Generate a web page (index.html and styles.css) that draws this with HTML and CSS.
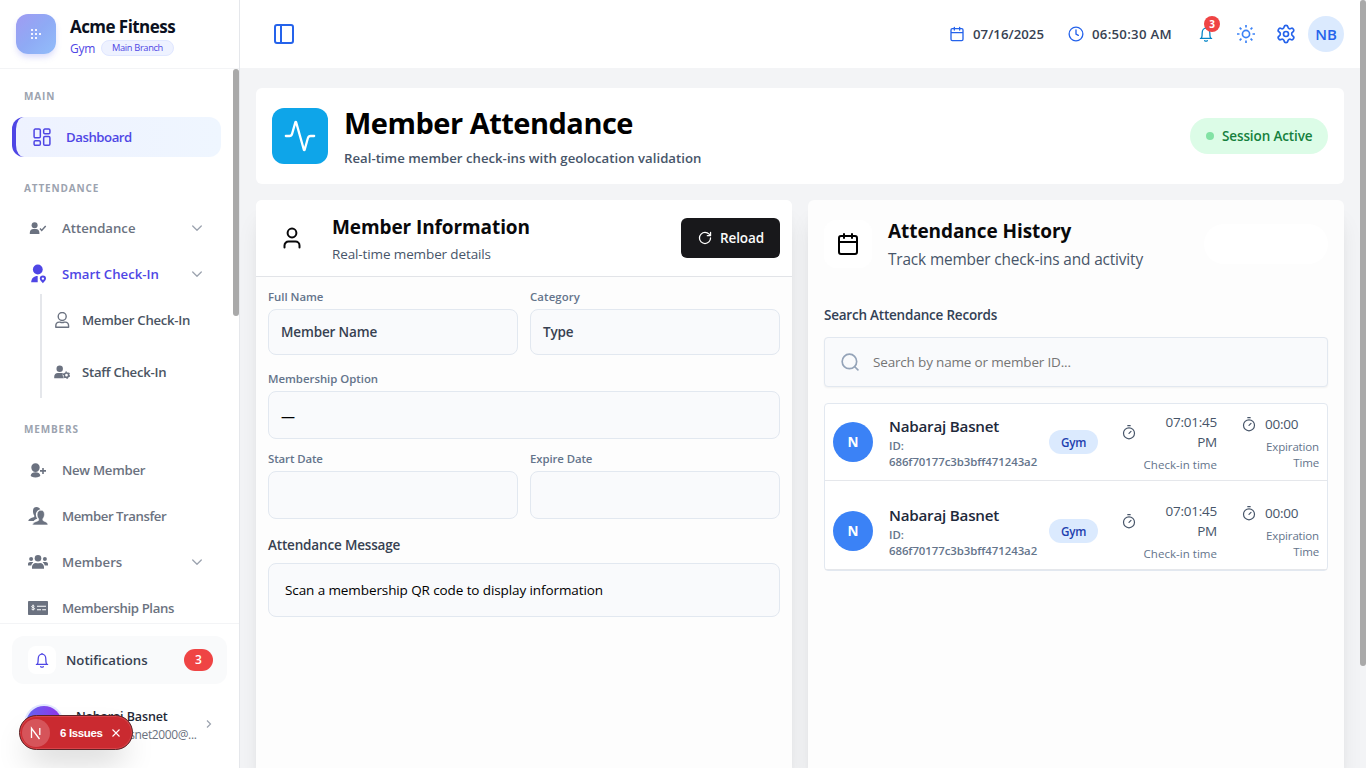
FILE: index.html
```html
<!DOCTYPE html>
<html lang="en">
<head>
<meta charset="utf-8">
<title>Member Attendance</title>
<link rel="stylesheet" href="styles.css">
</head>
<body>
<svg class="defs" width="0" height="0">
  <symbol id="chev" viewBox="0 0 12 12"><path d="M1.700 4 6 8.200l4.300-4.200" fill="none" stroke="currentColor" stroke-width="1.300" stroke-linecap="round" stroke-linejoin="round"/></symbol>
  <symbol id="calendar" viewBox="0 0 24 24"><path d="M8 2v4M16 2v4M3 10h18M5 4h14a2 2 0 0 1 2 2v14a2 2 0 0 1-2 2H5a2 2 0 0 1-2-2V6a2 2 0 0 1 2-2z" fill="none" stroke="currentColor" stroke-width="2" stroke-linecap="round" stroke-linejoin="round"/></symbol>
  <symbol id="bell" viewBox="0 0 24 24"><path d="M3.600 18.600h16.800M5.200 18.400c.8-2 1.100-4.400 1.100-8.400a5.700 6.700 0 0 1 11.400 0c0 4 .3 6.400 1.100 8.400M10 22c1 .8 3 .8 4 0M11 2.800h2" fill="none" stroke="currentColor" stroke-width="1.900" stroke-linecap="round" stroke-linejoin="round"/></symbol>
  <symbol id="timer" viewBox="0 0 16 16"><g fill="none" stroke="currentColor" stroke-width="1.200" stroke-linecap="round"><circle cx="8" cy="9.300" r="5.500"/><path d="M6.800 1.700h2.400M8 9.300l2-2"/></g></symbol>
</svg>
<div class="app">
  <aside class="sidebar">
    <div class="brand">
      <div class="logo"><svg width="12" height="12" viewBox="0 0 12 12" fill="#f4f4ff"><path d="M1 1h2v2H1zM5 1h2v2H5zM1 5h2v2H1zM5 5h2v2H5zM9 5h2v2H9zM1 9h2v2H1zM5 9h2v2H5z"/></svg></div>
      <div>
        <div class="brand-name">Acme Fitness</div>
        <div class="brand-sub"><span class="gym">Gym</span><span class="branch">Main Branch</span></div>
      </div>
    </div>
    <nav class="nav">
      <div class="thumb side-thumb"></div>
      <h4 class="sec first">MAIN</h4>
      <a class="item active"><svg width="20" height="20" viewBox="0 0 24 24" fill="none" stroke="currentColor" stroke-width="1.800" stroke-linejoin="round"><rect x="2.500" y="2.500" width="7.500" height="10.500" rx="1.500"/><rect x="14" y="2.500" width="7.500" height="5.500" rx="1.500"/><rect x="14" y="11.500" width="7.500" height="10.500" rx="1.500"/><rect x="2.500" y="16.500" width="7.500" height="5.500" rx="1.500"/></svg><span class="tighter">Dashboard</span></a>
      <h4 class="sec">ATTENDANCE</h4>
      <a class="item"><svg width="20" height="20" viewBox="0 0 20 20" fill="currentColor"><circle cx="6.600" cy="7.200" r="3"/><path d="M1.800 16v-1.300c0-2.300 1.500-3.700 3.500-3.700H8c2 0 3.400 1.400 3.400 3.700V16z"/><path d="M12 10.600l1.700 1.800 4-4.300" fill="none" stroke="currentColor" stroke-width="1.500"/></svg><span>Attendance</span><svg class="chev" width="12" height="12"><use href="#chev"/></svg></a>
      <a class="item current"><svg width="20" height="20" viewBox="0 0 20 20" fill="currentColor"><circle cx="9.800" cy="5.500" r="4.900"/><path d="M3.200 18.200c0-4 2.600-6.300 6.500-6.300v6.300z"/><path d="M14.900 11.500a3.100 3.100 0 0 1 3.100 3.100c0 1.900-1.800 3.200-3.100 4.700-1.300-1.500-3.100-2.800-3.100-4.700a3.100 3.100 0 0 1 3.100-3.100zm0 1.900a1.200 1.200 0 1 0 0 2.400 1.200 1.200 0 0 0 0-2.400z" fill-rule="evenodd"/></svg><span>Smart Check-In</span><svg class="chev" width="12" height="12"><use href="#chev"/></svg></a>
      <div class="sub">
        <a class="subitem"><svg width="16" height="16" viewBox="0 0 16 16" fill="none" stroke="currentColor" stroke-width="1.400"><circle cx="8.200" cy="4.500" r="4"/><path d="M1.800 15.200v-1.300c0-2.200 1.500-3.800 3.500-3.800h.8c1.300.7 2.900.7 4.200 0h.8c2 0 3.500 1.600 3.500 3.800v1.300z" stroke-linejoin="round"/></svg><span class="mid">Member Check-In</span></a>
        <a class="subitem"><svg width="16" height="16" viewBox="0 0 16 16" fill="currentColor"><circle cx="5.700" cy="4.800" r="3.200"/><path d="M.2 14.300v-1.500C.2 10.500 1.700 9 3.800 9h3.500c.6 0 1.100.1 1.600.3-.6 2 0 3.800 1 5z"/><circle cx="12.500" cy="11.200" r="2.100" fill="none" stroke="currentColor" stroke-width="1.500"/><circle cx="12.500" cy="11.200" r="3.100" fill="none" stroke="currentColor" stroke-width="1.100" stroke-dasharray="1.700 1.550"/></svg><span class="mid">Staff Check-In</span></a>
      </div>
      <h4 class="sec">MEMBERS</h4>
      <a class="item below"><svg width="20" height="20" viewBox="0 0 20 20" fill="currentColor"><path d="M7.500 3.200c2.500 0 4.200 1.700 4.200 4.100 0 2.800-1.800 4.800-4.200 4.800S3.300 10.100 3.300 7.300c0-2.400 1.700-4.100 4.200-4.100zM2.700 15.500c.4-2.300 2.300-3.200 4.800-3.200s4.400.9 4.800 3.200c.1.900-2 1.900-4.800 1.900s-4.900-1-4.800-1.900z"/><path d="M15 7.900v6M12 10.900h6" stroke="currentColor" stroke-width="1.600"/></svg><span class="mid">New Member</span></a>
      <a class="item"><svg width="20" height="20" viewBox="0 0 20 20" fill="currentColor"><path d="M9.400 12.700c-1-1.100-1.500-2.700-1.500-4.300 0-2.300 1.700-5 4.500-5-.7-1.500-2-2.400-3.900-2.400C5.900 1 4.800 2.900 5 5.500c.1 1.700.5 3 1.300 3.900v1.400C4.600 12 .8 12.200.3 15h5.400c.6-1.300 2.600-1.900 3.700-2.300z"/><path d="M13 4.300c2.300 0 3.500 1.700 3.400 4.300-.1 1.800-.7 3.300-1.600 4.200v1.500c1.200 1.500 4.900 1.300 5.100 4.600H4.600c.2-3.300 4.700-3.100 6.100-4.600v-1.500c-1-1-1.500-2.500-1.500-4.300 0-2.600 1.400-4.200 3.800-4.200z" stroke="#fff" stroke-width=".5"/></svg><span class="tighter">Member Transfer</span></a>
      <a class="item"><svg width="20" height="20" viewBox="0 0 20 20" fill="currentColor"><circle cx="10" cy="6.200" r="3.300"/><circle cx="3.100" cy="7" r="2"/><circle cx="16.900" cy="7" r="2"/><path d="M4 16.700v-1.600c0-2.400 1.700-4.200 4-4.200 1.300.6 2.700.6 4 0 2.300 0 4 1.800 4 4.200v1.600zM0 13.500v-1.400C0 10.900.9 10 2.100 10h2c.5 0 .9.100 1.200.4-1.100.7-1.800 1.800-2.100 3.100zM20 13.500v-1.400c0-1.200-.9-2.100-2.100-2.100h-2c-.5 0-.9.100-1.200.4 1.100.7 1.800 1.800 2.100 3.100z"/></svg><span>Members</span><svg class="chev" width="12" height="12"><use href="#chev"/></svg></a>
      <a class="item"><svg width="20" height="20" viewBox="0 0 20 20"><rect y="3" width="20" height="14" rx=".8" fill="currentColor"/><path d="M9 8.200h9M9 11.700h4M14.200 11.700H18" stroke="#fff" stroke-width="1.100"/><path d="M6.500 8.300c-.4-.7-2.800-.9-2.900.3 0 1.300 3 .7 3 2.100 0 1.200-2.500 1.200-3.100.3M5.100 6.600v5.800" stroke="#fff" stroke-width=".9" fill="none"/></svg><span class="tight">Membership Plans</span></a>
    </nav>
    <div class="side-foot">
      <div class="notif"><span class="bellbox"><svg width="16" height="16"><use href="#bell"/></svg></span><span>Notifications</span><span class="count">3</span></div>
      <div class="profile">
        <span class="pavatar"></span>
        <div class="pinfo"><div class="pname">Nabaraj Basnet</div><div class="pmail">nabarajbasnet2000@...</div></div>
        <svg width="8" height="12" viewBox="0 0 8 12"><path d="M2 2.500 5.500 6 2 9.500" fill="none" stroke="#9ca3af" stroke-width="1.200"/></svg>
      </div>
    </div>
  </aside>
  <main class="main">
    <header class="top">
      <svg class="toggle" width="24" height="24" viewBox="0 0 24 24" fill="none" stroke="#2563eb" stroke-width="2"><rect x="3" y="3" width="18" height="18" rx="2"/><path d="M9 3v18"/></svg>
      <div class="top-right">
        <div class="dt"><svg width="16" height="16"><use href="#calendar"/></svg><span class="date">07/16/2025</span></div>
        <div class="dt clock"><svg width="16" height="16" viewBox="0 0 24 24" fill="none" stroke="currentColor" stroke-width="2" stroke-linecap="round"><circle cx="12" cy="12" r="10.300"/><path d="M12 6v6l3.500 2"/></svg><span class="time">06:50:30 AM</span></div>
        <span class="ic bellic"><svg width="16" height="16"><use href="#bell"/></svg><b class="dot">3</b></span>
        <span class="ic sunic"><svg width="20" height="20" viewBox="0 0 24 24" fill="none" stroke="currentColor" stroke-width="2"><circle cx="12" cy="12" r="4.300"/><path d="M12 1.200v3M12 19.800v3M1.200 12h3M19.800 12h3M4.400 4.400l2.100 2.100M17.500 17.500l2.100 2.100M4.400 19.600l2.100-2.100M17.500 6.500l2.100-2.100"/></svg></span>
        <span class="ic gear"><svg width="20" height="20" viewBox="0 0 24 24" fill="none" stroke="currentColor" stroke-width="2" stroke-linejoin="round"><path d="M9.700 3.600a2.340 2.340 0 0 1 4.600 0 2.340 2.340 0 0 0 3.420 1.920 2.340 2.340 0 0 1 2.430 4.130 2.700 2.700 0 0 0 0 4.700 2.340 2.340 0 0 1-2.430 4.130 2.340 2.340 0 0 0-3.420 1.920 2.340 2.340 0 0 1-4.600 0 2.340 2.340 0 0 0-3.420-1.920 2.340 2.340 0 0 1-2.430-4.130 2.700 2.700 0 0 0 0-4.700A2.340 2.340 0 0 1 6.280 5.520 2.340 2.340 0 0 0 9.700 3.600z"/><circle cx="12" cy="12" r="3"/></svg></span>
        <span class="nb">NB</span>
      </div>
    </header>
    <div class="content">
      <section class="hero">
        <div class="hero-ic"><svg width="34" height="34" viewBox="0 0 24 24" fill="none" stroke="#fff" stroke-width="1.600" stroke-linecap="round" stroke-linejoin="round"><path d="M22 12h-2.480a2 2 0 0 0-1.930 1.460l-2.350 8.360a.25.25 0 0 1-.48 0L9.240 2.180a.25.25 0 0 0-.48 0l-2.350 8.360A2 2 0 0 1 4.490 12H2"/></svg></div>
        <div class="hero-text"><h1>Member Attendance</h1><p>Real-time member check-ins with geolocation validation</p></div>
        <div class="session"><i></i><span>Session Active</span></div>
      </section>
      <div class="cols">
        <section class="panel">
          <div class="phead">
            <div class="pic"><svg width="24" height="24" viewBox="0 0 24 24" fill="none" stroke="#09090b" stroke-width="2" stroke-linecap="round"><circle cx="12" cy="7" r="4.400"/><path d="M4.500 21.500v-2a4 4 0 0 1 4-4h7a4 4 0 0 1 4 4v2"/></svg></div>
            <div class="ptitle"><h2>Member Information</h2><p>Real-time member details</p></div>
            <button class="reload"><svg width="14" height="14" viewBox="0 0 24 24" fill="none" stroke="#fff" stroke-width="2.200" stroke-linecap="round" stroke-linejoin="round"><path d="M21.500 12a9.500 9.500 0 1 1-9.500-9.500c2.700 0 5.200 1 7.100 2.900L21 7.500"/><path d="M21.500 2.500v5.500h-5.500"/></svg><span>Reload</span></button>
          </div>
          <div class="form">
            <div class="frow"><div><label>Full Name</label><div class="field f46"><span>Member Name</span></div></div><div><label class="cat">Category</label><div class="field f46"><span>Type</span></div></div></div>
            <div class="fgroup opt"><label>Membership Option</label><div class="field dash">—</div></div>
            <div class="frow dates"><div><label class="date-label">Start Date</label><div class="field"></div></div><div><label class="date-label">Expire Date</label><div class="field"></div></div></div>
            <div class="fgroup"><label class="msg-label">Attendance Message</label><div class="field msg">Scan a membership QR code to display information</div></div>
          </div>
        </section>
        <section class="panel right">
          <div class="rhead">
            <div class="pic calbox"><svg width="24" height="24"><use href="#calendar"/></svg></div>
            <div class="ptitle"><h2>Attendance History</h2><p>Track member check-ins and activity</p></div>
            <div class="blank"></div>
          </div>
          <div class="search-label">Search Attendance Records</div>
          <div class="search"><svg width="20" height="20" viewBox="0 0 24 24" fill="none" stroke="#94a3b8" stroke-width="2" stroke-linecap="round"><circle cx="11.300" cy="11.300" r="8.700"/><path d="M21.500 21.500 18 18"/></svg><span>Search by name or member ID...</span></div>
          <div class="list">
            <div class="rec">
              <span class="avatar">N</span>
              <div class="who"><div class="name">Nabaraj Basnet</div><div class="id">ID:<br>686f70177c3b3bff471243a2</div></div>
              <span class="tag">Gym</span>
              <div class="cin"><div class="tline"><svg width="16" height="16"><use href="#timer"/></svg><span>07:01:45<br>PM</span></div><div class="small chk">Check-in time</div></div>
              <div class="exp"><div class="tline"><svg width="16" height="16"><use href="#timer"/></svg><span>00:00</span></div><div class="small">Expiration<br>Time</div></div>
            </div>
            <div class="rec">
              <span class="avatar">N</span>
              <div class="who"><div class="name">Nabaraj Basnet</div><div class="id">ID:<br>686f70177c3b3bff471243a2</div></div>
              <span class="tag">Gym</span>
              <div class="cin"><div class="tline"><svg width="16" height="16"><use href="#timer"/></svg><span>07:01:45<br>PM</span></div><div class="small chk">Check-in time</div></div>
              <div class="exp"><div class="tline"><svg width="16" height="16"><use href="#timer"/></svg><span>00:00</span></div><div class="small">Expiration<br>Time</div></div>
            </div>
          </div>
        </section>
      </div>
    </div>
  </main>
</div>
<div class="thumb page-thumb"></div>
<div class="toast"><span class="n"><svg width="14" height="14" viewBox="0 0 14 14" fill="none" stroke="#fff" stroke-width="1.300"><path d="M2.500 12V2.300l8 10.700M10.800 2v7"/></svg></span><span class="issues">6 Issues</span><svg width="10" height="10" viewBox="0 0 10 10" stroke="#fff" stroke-width="1.100"><path d="M1.500 1.500l7 7M8.500 1.500l-7 7"/></svg></div>
</body>
</html>
```
FILE: styles.css
```css
* { box-sizing: border-box; margin: 0; padding: 0; }
html, body { height: 100%; overflow: hidden; }
body { font-family: "Open Sans", "Noto Sans", sans-serif; font-size: 13.5px; line-height: 20px; color: #000; background: #f3f4f6; }
svg { flex: none; display: block; }
.defs { position: absolute; }
.app { display: flex; height: 100%; }

/* sidebar */
.sidebar { width: 240px; flex: none; display: flex; flex-direction: column; background: #fff; border-right: 1px solid #e5e7eb; height: 100%; }
.brand { height: 69px; flex: none; display: flex; gap: 14px; padding: 14px 16px 0; border-bottom: 1px solid #f3f4f6; }
.logo { width: 40px; height: 40px; border-radius: 12px; background: linear-gradient(135deg, #a09bf2, #8faaf5 50%, #92bdfa); display: flex; align-items: center; justify-content: center; box-shadow: 0 4px 6px -1px rgba(99,102,241,.25); }
.brand-name { font-size: 17px; line-height: 22px; font-weight: 700; letter-spacing: -.55px; color: #0b1020; padding-top: 2px; white-space: nowrap; }
.brand-sub { display: flex; align-items: center; gap: 6px; height: 20px; }
.gym { font-size: 12px; font-weight: 500; letter-spacing: -.28px; color: #4f46e5; width: 25px; white-space: nowrap; padding-top: 1px; }
.branch { height: 16px; line-height: 14px; border: 1px solid #e0e7ff; border-radius: 8px; background: #eef2ff; color: #4f46e5; font-size: 9.300px; font-weight: 500; letter-spacing: -.35px; padding: 0 10px; white-space: nowrap; width: 73px; text-align: center; }
.nav { flex: 1; min-height: 0; overflow: hidden; position: relative; padding: 0 18px 0 12px; display: flex; flex-direction: column; }
.nav > * { flex: none; }
.thumb { position: absolute; background: #a9a9a9; border-radius: 3px; width: 6px; }
.side-thumb { right: 0; top: 0; height: 247px; }
.page-thumb { right: 0; top: 0; height: 666px; }
.sec { font-size: 10px; line-height: 17px; font-weight: 700; color: #9ca3af; letter-spacing: .85px; padding-left: 12px; margin: 23px 0 11px; }
.sec.first { margin: 19px 0 12px; }
.item { height: 40px; display: flex; align-items: center; gap: 14px; padding: 0 18px 0 16px; margin-bottom: 6px; font-size: 13.200px; font-weight: 600; color: #6b7280; white-space: nowrap; }
.item.active { margin-bottom: 0; color: #4f46e5; border-left: 4px solid #4f46e5; border-radius: 12px; background: linear-gradient(90deg, #eef2ff, #eff6ff); }
.item.current { color: #4f46e5; margin-bottom: 0; }
.item.below { margin-top: 1px; }
.chev { margin-left: auto; color: #9ca3af; }
.tighter { letter-spacing: -.45px; }
.tight { letter-spacing: -.39px; }
.mid { letter-spacing: -.28px; }
.sub { margin-left: 28px; border-left: 2px solid #e5e7eb; }
.subitem { height: 52px; display: flex; align-items: center; gap: 12px; padding-left: 12px; font-size: 13.200px; font-weight: 600; color: #4b5563; white-space: nowrap; }
.subitem svg { color: #6b7280; }
.side-foot { height: 145px; flex: none; border-top: 1px solid #f3f4f6; padding: 12px; }
.notif { height: 48px; border-radius: 12px; background: #f9fafb; display: flex; align-items: center; padding: 0 14px 0 16px; font-size: 13.200px; font-weight: 600; color: #374151; }
.bellbox { width: 28px; height: 28px; border-radius: 8px; background: #fff; color: #4f46e5; display: flex; align-items: center; justify-content: center; margin-right: 10px; }
.count { margin-left: auto; width: 29px; height: 22px; border-radius: 11px; background: #ef4444; color: #fff; font-size: 12px; line-height: 22px; font-weight: 600; text-align: center; }
.profile { display: flex; align-items: center; height: 40px; margin-top: 20px; padding: 0 14px; }
.pavatar { width: 36px; height: 36px; border-radius: 50%; background: linear-gradient(90deg, #6366f1, #9333ea); box-shadow: 0 0 0 2px #e0e7ff; flex: none; }
.pinfo { margin-left: 14px; width: 129px; white-space: nowrap; padding-top: 3px; }
.pname { font-size: 12.500px; line-height: 18px; font-weight: 600; color: #1f2937; letter-spacing: -.1px; }
.pmail { font-size: 12px; line-height: 18px; color: #6b7280; letter-spacing: -.38px; }

/* top bar */
.main { flex: 1; min-width: 0; padding-right: 6px; }
.top { height: 68px; background: #fff; display: flex; align-items: center; justify-content: space-between; padding: 0 16px 0 32px; }
.top-right { display: flex; align-items: center; color: #2563eb; }
.dt { display: flex; align-items: center; gap: 8px; margin-right: 24px; font-size: 13.200px; font-weight: 600; }
.dt span { color: #374151; white-space: nowrap; }
.date { letter-spacing: .04px; width: 71px; }
.time { letter-spacing: .28px; width: 80px; }
.clock { margin-right: 14px; }
.ic { width: 40px; display: flex; justify-content: center; position: relative; }
.bellic { color: #0284c7; }
.sunic { color: #3b82f6; }
.dot { position: absolute; left: 18px; top: -10px; width: 16px; height: 16px; border-radius: 50%; background: #ef4444; color: #fff; font-size: 10px; line-height: 16px; text-align: center; }
.nb { width: 36px; height: 36px; border-radius: 50%; background: #dbeafe; font-size: 15px; line-height: 37px; font-weight: 600; text-align: center; margin-left: 2px; }

/* content */
.content { padding: 20px 16px 0; }
.hero { height: 96px; background: #fff; border-radius: 6px; display: flex; align-items: center; padding: 0 16px; gap: 16px; }
.hero-ic { width: 56px; height: 56px; border-radius: 12px; background: #0ea5e9; display: flex; align-items: center; justify-content: center; }
.hero-text { flex: 1; white-space: nowrap; }
.hero h1 { font-size: 29px; line-height: 36px; font-weight: 700; letter-spacing: -.5px; margin-top: 1px; }
.hero p { font-size: 13.200px; font-weight: 600; color: #475569; letter-spacing: .01px; margin-top: 7px; }
.session { width: 138px; height: 36px; border-radius: 18px; background: #dcfce7; color: #15803d; font-weight: 600; display: flex; align-items: center; padding-left: 16px; gap: 8px; letter-spacing: -.12px; white-space: nowrap; }
.session i { width: 8px; height: 8px; border-radius: 50%; background: #82e2a4; }
.cols { display: grid; grid-template-columns: 1fr 1fr; gap: 16px; margin-top: 16px; }
.panel { height: 568px; border-radius: 6px 6px 0 0; background: #fdfdfd; box-shadow: 0 20px 25px -5px rgba(0,0,0,.1), 0 8px 10px -6px rgba(0,0,0,.1); }
.phead { height: 77px; background: #fff; border-bottom: 1px solid #e2e4e8; border-radius: 6px 6px 0 0; display: flex; align-items: center; padding: 0 12px; gap: 16px; }
.pic { width: 48px; height: 48px; border-radius: 12px; display: flex; align-items: center; justify-content: center; flex: none; }
.ptitle { flex: 1; white-space: nowrap; }
.ptitle h2 { font-size: 19px; line-height: 28px; font-weight: 700; color: #09090b; letter-spacing: -.09px; margin-top: 1px; }
.ptitle p { color: #475569; letter-spacing: -.12px; margin-top: 3px; }
.reload { width: 99px; height: 40px; border: 0; border-radius: 6px; background: #18181b; color: #fafafa; font: 600 13.5px/20px "Open Sans", sans-serif; letter-spacing: -.1px; display: flex; align-items: center; padding-left: 17px; gap: 8px; }
.form { padding: 12px 12px 0; }
label { display: block; font-size: 11.400px; line-height: 16px; font-weight: 600; color: #64748b; margin-bottom: 4px; letter-spacing: -.02px; }
.cat { letter-spacing: .1px; }
.date-label { letter-spacing: -.1px; }
.frow { display: grid; grid-template-columns: 1fr 1fr; gap: 12px; }
.field { height: 48px; border: 1px solid #e2e8f0; border-radius: 8px; background: #f9fafc; display: flex; align-items: center; padding: 0 12px; }
.f46 { height: 46px; font-weight: 600; color: #374151; letter-spacing: -.15px; }
.opt { margin-top: 16px; }
.dash { font-size: 14px; padding-top: 3px; }
.dates { margin-top: 12px; }
.msg-label { font-size: 13.500px; line-height: 20px; font-weight: 600; color: #374151; margin: 16px 0 8px; letter-spacing: -.17px; }
.msg { height: 54px; padding: 0 16px; letter-spacing: -.1px; }

/* history */
.right { padding: 20px 16px 0; }
.rhead { display: flex; align-items: center; gap: 16px; height: 48px; }
.calbox { background: #fff; }
.rhead h2 { letter-spacing: -.07px; margin-top: 0; }
.rhead p { font-size: 15.400px; line-height: 22px; letter-spacing: -.15px; margin-top: 4px; }
.blank { width: 124px; height: 40px; border-radius: 20px; background: #fff; }
.search-label { margin-top: 37px; font-weight: 600; color: #334155; letter-spacing: -.22px; }
.search { height: 50px; margin-top: 12px; border: 1px solid #e2e8f0; border-radius: 4px; background: #f9fafc; box-shadow: 0 1px 2px rgba(0,0,0,.05); display: flex; align-items: center; padding-left: 15px; gap: 13px; color: #757575; letter-spacing: -.17px; }
.list { margin-top: 16px; border: 1px solid #e2e8f0; border-radius: 4px; background: #fff; }
.rec { display: flex; align-items: center; height: 77px; padding: 0 8px; border-bottom: 1px solid #e5e7eb; }
.rec + .rec { margin-top: 12px; }
.avatar { width: 40px; height: 40px; border-radius: 50%; background: #3b82f6; color: #fff; font-size: 13.500px; line-height: 40px; font-weight: 700; text-align: center; }
.who { width: 160px; margin-left: 16px; white-space: nowrap; }
.name { font-size: 15.200px; line-height: 24px; font-weight: 600; color: #1e293b; letter-spacing: -.22px; }
.id { font-size: 11.400px; line-height: 16px; font-weight: 600; color: #64748b; letter-spacing: -.06px; }
.tag { width: 49px; height: 24px; border-radius: 12px; background: #dbeafe; color: #1e40af; font-size: 11.700px; line-height: 24px; font-weight: 600; text-align: center; letter-spacing: -.25px; }
.cin { width: 96px; margin-left: 23px; color: #475569; text-align: right; }
.exp { margin-left: auto; width: 78px; text-align: right; color: #475569; }
.tline { display: flex; align-items: center; gap: 8px; letter-spacing: -.25px; }
.cin .tline { justify-content: space-between; }
.small { font-size: 11.500px; line-height: 16px; color: #64748b; margin-top: 5px; margin-bottom: -1px; letter-spacing: -.15px; white-space: nowrap; }
.chk { letter-spacing: .03px; }

/* floating error toast */
.toast { position: absolute; left: 19px; top: 715px; width: 114px; height: 35px; border-radius: 18px; background: #ca2a30; border: 1px solid #5c2427; box-shadow: inset 0 0 0 1px #d8444a, 0 16px 32px -8px rgba(0,0,0,.24); display: flex; align-items: center; padding-left: 2px; color: #fff; }
.n { width: 28px; height: 28px; border-radius: 50%; background: #d6545a; display: flex; align-items: center; justify-content: center; margin-right: 10px; }
.issues { font: 700 11.500px/20px "Liberation Sans", sans-serif; letter-spacing: -.35px; width: 44px; margin-right: 7px; white-space: nowrap; }
```
